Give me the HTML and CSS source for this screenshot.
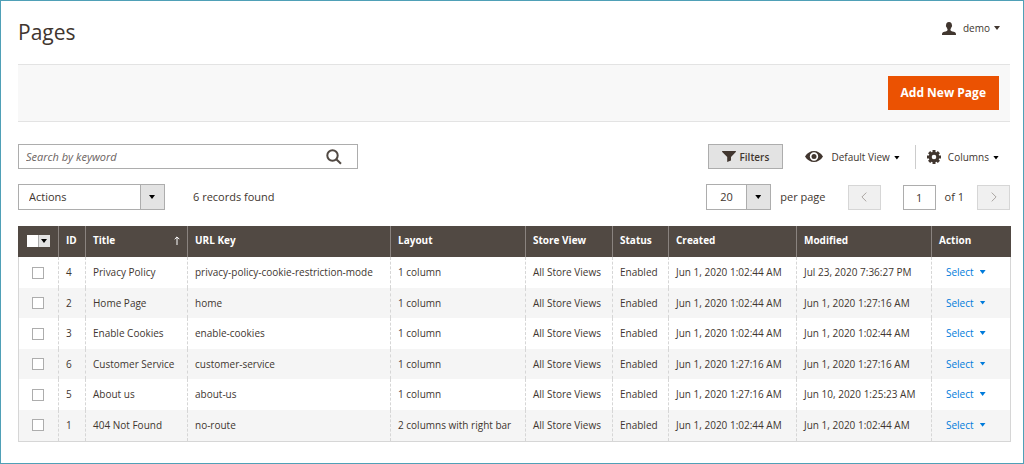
FILE: index.html
```html
<!DOCTYPE html>
<html lang="en">
<head>
<meta charset="utf-8">
<title>Pages</title>
<link rel="stylesheet" href="styles.css">
</head>
<body>
<main class="page">
  <header class="page-header">
    <h1 class="page-title">Pages</h1>
    <button class="user-menu" type="button">
      <svg class="icon-user" viewBox="0 0 14 13" aria-hidden="true"><path d="M7 0C4.900 0 4 1.300 4.100 3.200 3.700 3.400 4 4.900 4.500 5c.2 1 .6 1.500 1 2v1.200C5.100 9.500 2.500 9.500 1 10.300.2 10.800 0 11.700 0 13h14c0-1.300-.2-2.200-1-2.700-1.500-.8-4.100-.8-4.500-2.100V7c.4-.5.800-1 1-2 .5-.1.800-1.600.4-1.800C10 1.300 9.100 0 7 0z"/></svg>
      <span>demo</span><i class="caret"></i>
    </button>
  </header>

  <div class="action-bar"><button class="primary" type="button">Add New Page</button></div>

  <div class="toolbar">
    <form class="search" role="search">
      <input class="search-input" type="search" placeholder="Search by keyword" aria-label="Search by keyword">
      <button class="search-button" type="button" aria-label="Search">
        <svg class="icon-search" viewBox="0 0 16 16" aria-hidden="true"><circle cx="6.500" cy="6.500" r="5.200"/><path d="M10.300 10.300l4.700 4.500"/></svg>
      </button>
    </form>
    <div class="view-tools">
      <button class="filters" type="button">
        <svg class="icon-filter" viewBox="0 0 14 11" aria-hidden="true"><path d="M.6 0h12.800c.6 0 .8.700.4 1.100L9 6v3.600L5.200 11V6L.2 1.100C-.2.700 0 0 .6 0z"/></svg>
        <span>Filters</span>
      </button>
      <button class="view-button" type="button">
        <svg class="icon-eye" viewBox="0 0 18 11" aria-hidden="true"><path fill-rule="evenodd" d="M0 5.500C2.300 1.900 5.400 0 9 0s6.700 1.900 9 5.500C15.700 9.100 12.600 11 9 11S2.300 9.100 0 5.500zM9 1.300a4.200 4.200 0 100 8.400 4.200 4.200 0 000-8.400z"/><circle cx="9" cy="5.500" r="2.500"/></svg>
        <span>Default View</span><i class="caret"></i>
      </button>
      <button class="columns-button" type="button">
        <svg class="icon-gear" viewBox="-7 -7 14 14" aria-hidden="true"><circle r="3.800"/><path d="M0-7V-4M0 4V7M-7 0H-4M4 0H7M-4.900-4.900L-2.900-2.900M2.900 2.900L4.900 4.900M-4.900 4.900L-2.900 2.900M2.900-2.900L4.900-4.900"/></svg>
        <span>Columns</span><i class="caret"></i>
      </button>
    </div>
  </div>

  <div class="toolbar toolbar-paging">
    <div class="bulk">
      <div class="select-box actions-box">
        <select class="select" aria-label="Actions"><option>Actions</option></select><i class="caret"></i>
      </div>
      <span>6 records found</span>
    </div>
    <div class="pager">
      <div class="select-box size-box">
        <select class="select" id="page-size"><option>20</option></select><i class="caret"></i>
      </div>
      <label class="size-label" for="page-size">per page</label>
      <button class="step" type="button" aria-label="Previous page" disabled><svg class="icon-step" viewBox="0 0 6 10" aria-hidden="true"><path d="M5.300.600L.9 5l4.400 4.400"/></svg></button>
      <input class="page-number" id="page-number" type="text" value="1">
      <label class="page-label" for="page-number">of 1</label>
      <button class="step" type="button" aria-label="Next page" disabled><svg class="icon-step" viewBox="0 0 6 10" aria-hidden="true"><path d="M.7.600L5.100 5 .7 9.400"/></svg></button>
    </div>
  </div>

  <table class="grid">
    <colgroup><col class="col-check"><col class="col-id"><col class="col-title"><col class="col-url"><col class="col-layout"><col class="col-store"><col class="col-status"><col class="col-created"><col class="col-modified"><col class="col-action"></colgroup>
    <thead>
      <tr>
        <th><button class="select-all" type="button" aria-label="Select rows"><i class="caret"></i></button></th>
        <th>ID</th>
        <th><span class="sorted">Title <svg class="icon-sort" viewBox="0 0 6 9" aria-hidden="true"><path d="M3 9V1M.7 3.200L3 .9l2.300 2.300"/></svg></span></th>
        <th>URL Key</th><th>Layout</th><th>Store View</th><th>Status</th><th>Created</th><th>Modified</th><th>Action</th>
      </tr>
    </thead>
    <tbody>
      <tr><td><input class="check" type="checkbox" aria-label="Privacy Policy"></td><td>4</td><td>Privacy Policy</td><td>privacy-policy-cookie-restriction-mode</td><td>1 column</td><td>All Store Views</td><td>Enabled</td><td>Jun 1, 2020 1:02:44 AM</td><td>Jul 23, 2020 7:36:27 PM</td><td><button class="row-action" type="button">Select<i class="caret"></i></button></td></tr>
      <tr><td><input class="check" type="checkbox" aria-label="Home Page"></td><td>2</td><td>Home Page</td><td>home</td><td>1 column</td><td>All Store Views</td><td>Enabled</td><td>Jun 1, 2020 1:02:44 AM</td><td>Jun 1, 2020 1:27:16 AM</td><td><button class="row-action" type="button">Select<i class="caret"></i></button></td></tr>
      <tr><td><input class="check" type="checkbox" aria-label="Enable Cookies"></td><td>3</td><td>Enable Cookies</td><td>enable-cookies</td><td>1 column</td><td>All Store Views</td><td>Enabled</td><td>Jun 1, 2020 1:02:44 AM</td><td>Jun 1, 2020 1:02:44 AM</td><td><button class="row-action" type="button">Select<i class="caret"></i></button></td></tr>
      <tr><td><input class="check" type="checkbox" aria-label="Customer Service"></td><td>6</td><td>Customer Service</td><td>customer-service</td><td>1 column</td><td>All Store Views</td><td>Enabled</td><td>Jun 1, 2020 1:27:16 AM</td><td>Jun 1, 2020 1:27:16 AM</td><td><button class="row-action" type="button">Select<i class="caret"></i></button></td></tr>
      <tr><td><input class="check" type="checkbox" aria-label="About us"></td><td>5</td><td>About us</td><td>about-us</td><td>1 column</td><td>All Store Views</td><td>Enabled</td><td>Jun 1, 2020 1:27:16 AM</td><td>Jun 10, 2020 1:25:23 AM</td><td><button class="row-action" type="button">Select<i class="caret"></i></button></td></tr>
      <tr><td><input class="check" type="checkbox" aria-label="404 Not Found"></td><td>1</td><td>404 Not Found</td><td>no-route</td><td>2 columns with right bar</td><td>All Store Views</td><td>Enabled</td><td>Jun 1, 2020 1:02:44 AM</td><td>Jun 1, 2020 1:02:44 AM</td><td><button class="row-action" type="button">Select<i class="caret"></i></button></td></tr>
    </tbody>
  </table>
</main>
</body>
</html>
```
FILE: styles.css
```css
* { box-sizing: border-box; }

body {
  margin: 0;
  background: #fff;
  color: #41362f;
  font: 11px/16px "Open Sans", "Noto Sans", sans-serif;
}

button, input, select {
  margin: 0;
  padding: 0;
  border: 0;
  border-radius: 0;
  background: none;
  color: inherit;
  font: inherit;
}

.page {
  min-height: 100vh;
  padding: 0 13px 0 17px;
  border: 1px solid #4fa0b7;
}

.caret {
  flex: none;
  width: 6px;
  height: 4px;
  background: currentColor;
  clip-path: polygon(0 0, 100% 0, 50% 100%);
}

svg { flex: none; fill: #41362f; }

.page-header {
  display: flex;
  align-items: flex-start;
  justify-content: space-between;
  height: 63px;
  padding: 16px 10px 0 0;
}
.page-title { margin: 0; font-size: 21px; line-height: 30px; font-weight: 400; }
.user-menu { display: flex; align-items: center; gap: 4px; margin-top: 3px; font-size: 10px; }
.icon-user { width: 14px; height: 13px; margin-right: 3px; }

.action-bar {
  display: flex;
  align-items: center;
  justify-content: flex-end;
  height: 58px;
  margin-bottom: 22px;
  padding-right: 11px;
  border: solid #e3e3e3;
  border-width: 1px 0;
  background: #f8f8f8;
}
.primary {
  height: 34px;
  padding: 0 13px;
  background: #eb5202;
  color: #fff;
  font-size: 12px;
  font-weight: 700;
}

.toolbar { display: flex; align-items: center; justify-content: space-between; height: 25px; margin-bottom: 15px; }

.search { display: flex; flex: 0 1 340px; height: 25px; border: 1px solid #adadad; }
.search-input { flex: 1; min-width: 0; padding-left: 7px; outline: 0; }
.search-input::placeholder { color: #6b635f; font-style: italic; opacity: 1; }
.search-button { display: flex; align-items: center; padding: 0 15px; }
.icon-search { width: 16px; height: 16px; fill: none; stroke: #514943; stroke-width: 2; }

.view-tools { display: flex; align-items: center; padding-right: 11px; font-size: 10px; }
.filters {
  display: flex;
  align-items: center;
  justify-content: center;
  gap: 3px;
  width: 75px;
  height: 25px;
  border: 1px solid #adadad;
  background: #e3e3e3;
  font-weight: 600;
}
.icon-filter { width: 14px; height: 11px; }
.view-button, .columns-button { display: flex; align-items: center; gap: 4px; height: 24px; }
.view-button { padding: 0 15px 0 22px; }
.columns-button { padding-left: 11px; border-left: 1px solid #ccc; }
.view-tools .caret { margin-top: 2px; color: #000; }
.icon-eye { width: 18px; height: 11px; margin-right: 4px; }
.icon-gear { width: 14px; height: 14px; margin-right: 3px; fill: none; stroke: #41362f; stroke-width: 3; }

.toolbar-paging { height: 26px; margin-bottom: 16px; }
.bulk { display: flex; align-items: center; gap: 28px; }
.select-box {
  display: grid;
  grid-template-columns: 1fr 24px;
  align-items: center;
  justify-items: center;
  height: 26px;
  border: 1px solid #adadad;
  background: linear-gradient(to left, #e3e3e3 23px, #adadad 23px, #adadad 24px, #fff 24px);
}
.select { grid-area: 1 / 1 / 2 / 3; width: 100%; height: 100%; padding-left: 10px; appearance: none; }
.select-box .caret { grid-area: 1 / 2; color: #000; pointer-events: none; }
.actions-box { width: 147px; }
.size-box { width: 65px; }
.size-box .select { padding-left: 13px; }

.pager { display: flex; align-items: center; }
.size-label { margin: 0 22px 0 9px; }
.step {
  display: flex;
  align-items: center;
  justify-content: center;
  width: 33px;
  height: 25px;
  border: 1px solid #d6d6d6;
  background: #f0f0f0;
}
.icon-step { width: 6px; height: 10px; fill: none; stroke: #aaa5a2; }
.page-number { width: 33px; height: 25px; margin: 0 9px 0 22px; border: 1px solid #adadad; text-align: center; }
.page-label { margin-right: 13px; }

.grid { width: 100%; border-collapse: collapse; table-layout: fixed; font-size: 10px; }
.col-check { width: 40px; }
.col-id { width: 27px; }
.col-title { width: 102px; }
.col-url { width: 203px; }
.col-layout { width: 135px; }
.col-store { width: 87px; }
.col-status { width: 56px; }
.col-created { width: 128px; }
.col-modified { width: 135px; }
.col-action { width: 79px; }

.grid th, .grid td { height: 31px; padding: 0 0 1px 7px; text-align: left; white-space: nowrap; }
.grid th { padding-bottom: 3px; border: solid #8a837f; border-width: 0 1px; background: #514943; color: #fff; font-weight: 700; }
.grid th:first-child { padding: 0 0 1px 8px; border-left-color: #514943; }
.grid th:last-child { border-right-color: #514943; }
.grid td { border: dashed #d6d6d6; border-width: 0 1px; }
.grid td:first-child { padding: 0 2px 0 0; border-left-style: solid; }
.grid td:last-child { padding-left: 14px; border-right-style: solid; }
.grid tbody tr:nth-child(even) td { height: 30px; background: #f5f5f5; }
.grid tbody tr:last-child td { height: 31px; border-bottom: 1px solid #d6d6d6; }

.sorted { display: flex; align-items: center; justify-content: space-between; padding-right: 7px; }
.icon-sort { width: 6px; height: 9px; fill: none; stroke: #fff; }
.select-all {
  display: flex;
  align-items: center;
  justify-content: flex-end;
  width: 23px;
  height: 12px;
  padding-right: 3px;
  background: linear-gradient(to left, #e3e3e3 11px, #adadad 11px, #adadad 12px, #fff 12px);
  color: #000;
}
.check {
  display: block;
  width: 12px;
  height: 12px;
  margin: 0 auto;
  border: 1px solid #adadad;
  background: #fff;
  appearance: none;
}
.check:checked { background: #514943; box-shadow: inset 0 0 0 2px #fff; }
.row-action { display: flex; align-items: center; gap: 6px; color: #007bdb; }
```
